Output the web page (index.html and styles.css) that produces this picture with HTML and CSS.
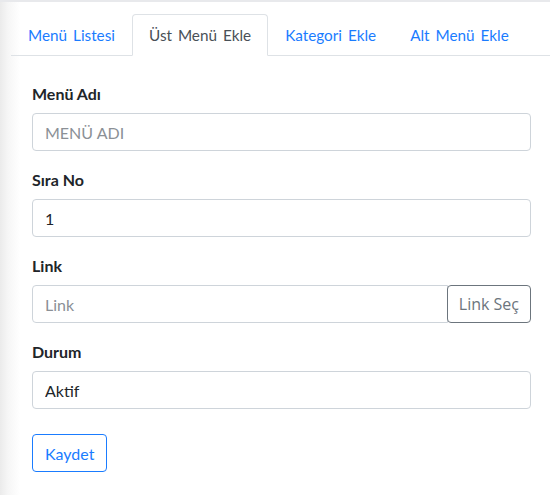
FILE: index.html
```html
<!DOCTYPE html>
<html lang="tr">
	<head>
		<meta charset="utf-8" />
		<title>Menü Yönetimi</title>
		<link rel="stylesheet" href="styles.css">
	</head>

	<body>
		<div class="panel">
			<ul class="tabs">
				<li><a href="#" class="tab">Menü Listesi</a></li>
				<li><a href="#" class="tab active">Üst Menü Ekle</a></li>
				<li><a href="#" class="tab">Kategori Ekle</a></li>
				<li><a href="#" class="tab">Alt Menü Ekle</a></li>
			</ul>

			<form class="tab-body" action="" onsubmit="return false">
				<div class="group">
					<label for="menuAdi">Menü Adı</label>
					<input type="text" id="menuAdi" class="field" placeholder="MENÜ ADI" />
				</div>
				<div class="group">
					<label for="siraNo">Sıra No</label>
					<input type="text" id="siraNo" class="field" value="1" />
				</div>
				<div class="group">
					<label for="link">Link</label>
					<div class="input-row">
						<input type="text" id="link" class="field" placeholder="Link" />
						<button type="button" class="pick">Link Seç</button>
					</div>
				</div>
				<div class="group">
					<label for="durum">Durum</label>
					<select id="durum" class="field">
						<option>Aktif</option>
						<option>Pasif</option>
					</select>
				</div>
				<button type="submit" class="save">Kaydet</button>
			</form>
		</div>
	</body>
</html>
```

FILE: styles.css
```css
html,
body {
	margin: 0;
	padding: 0;
	background: #fff;
}
body {
	font-family: "Lato", "Noto Sans", sans-serif;
	font-size: 16px;
	color: #212529;
	border-top: 2px solid #e8e9ec;
	min-height: 493px;
	background: linear-gradient(to right, #ebebeb 0, #f6f6f6 8px, #fff 20px);
}
.panel {
	padding: 12px 0 0 11px;
}
.tabs {
	display: flex;
	margin: 0;
	padding: 0;
	list-style: none;
	border-bottom: 1px solid #dee2e6;
}
.tabs li {
	margin-bottom: -1px;
}
.tab {
	display: block;
	padding: 8px 16px;
	font-size: 15.3px;
	word-spacing: 2px;
	line-height: 24px;
	color: #1a7cff;
	text-decoration: none;
	border: 1px solid transparent;
	border-top-left-radius: 4px;
	border-top-right-radius: 4px;
}
.tab.active {
	color: #495057;
	background: #fff;
	border-color: #dee2e6 #dee2e6 #fff;
}
.tab-body {
	padding: 26px 19px 0 21px;
}
.group {
	margin-bottom: 17px;
}
label {
	display: block;
	margin-bottom: 7px;
	font-weight: 700;
	line-height: 24px;
}
.field {
	display: block;
	box-sizing: border-box;
	width: 100%;
	height: 38px;
	padding: 6px 12px;
	font-family: inherit;
	font-size: 16px;
	color: #212529;
	background: #fff;
	border: 1px solid #ced4da;
	border-radius: 4px;
	appearance: none;
	-webkit-appearance: none;
}
.field::placeholder {
	color: #8b9096;
}
.input-row {
	display: flex;
}
.input-row .field {
	flex: 1;
	border-top-right-radius: 0;
	border-bottom-right-radius: 0;
}
.pick {
	flex: none;
	height: 38px;
	padding: 6px 11px;
	margin-left: -1px;
	font-family: "Open Sans", "Noto Sans", sans-serif;
	font-size: 16px;
	white-space: nowrap;
	color: #6c757d;
	background: #fff;
	border: 1px solid #6c757d;
	border-radius: 4px;
	cursor: pointer;
}
.save {
	margin-top: 8px;
	height: 38px;
	padding: 6px 12px;
	font-family: inherit;
	font-size: 16px;
	color: #1a7cff;
	background: #fff;
	border: 1px solid #1a7cff;
	border-radius: 4px;
	cursor: pointer;
}
```
